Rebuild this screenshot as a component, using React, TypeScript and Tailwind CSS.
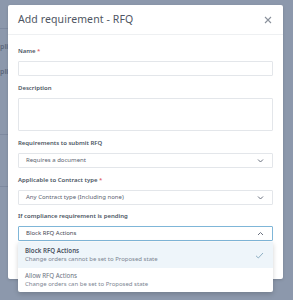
import React from "react";

const Chevron = ({ up = false }: { up?: boolean }) => (
  <svg width="7" height="5" viewBox="0 0 7 5" className="shrink-0">
    <path
      d={up ? "M1 4 L3.5 1.5 L6 4" : "M1 1.5 L3.5 4 L6 1.5"}
      fill="none"
      stroke="#6b7280"
      strokeWidth="1"
    />
  </svg>
);

const Label = ({ children, req = false }: { children: React.ReactNode; req?: boolean }) => (
  <div className="h-[9px] leading-[9px] text-[6px] font-semibold text-[#4b5563] mb-[5px]">
    {children}
    {req && <span className="text-[#e06666]"> *</span>}
  </div>
);

const Select = ({ value, open = false }: { value: string; open?: boolean }) => (
  <div
    className={`h-[15px] flex items-center justify-between pl-[7px] pr-[8px] bg-white border rounded-[1px] ${
      open ? "border-[#7fb6d8]" : "border-[#e3e6ea]"
    }`}
  >
    <span className={`text-[6px] ${open ? "text-[#3f4652]" : "text-[#5b6270]"}`}>{value}</span>
    <Chevron up={open} />
  </div>
);

export default function App() {
  return (
    <div
      className="relative w-[293px] h-[300px] overflow-hidden bg-[#8c98ac]"
      style={{ fontFamily: '"Noto Sans", "Open Sans", Arial, sans-serif' }}
    >
      {/* faint background page content */}
      <div className="absolute left-0 top-[42px] text-[7px] font-semibold text-[#4a5568] opacity-70">pli</div>
      <div className="absolute left-0 top-[67px] text-[7px] font-semibold text-[#4a5568] opacity-70">pli</div>
      <div className="absolute left-0 top-[28px] w-[8px] h-px bg-[#7e8aa0]" />
      <div className="absolute left-0 top-[134px] w-[8px] h-px bg-[#7e8aa0]" />
      <div className="absolute left-0 top-[186px] w-[8px] h-px bg-[#7e8aa0]" />

      <div className="absolute left-[8px] top-[5px] w-[275px] h-[274px] bg-white rounded-[2px] shadow-[0_1px_3px_rgba(0,0,0,0.15)]">
        <div className="h-[30px] flex items-center justify-between pl-[10px] pr-[11px] border-b border-[#eef0f2]">
          <span className="text-[10.5px] text-[#4f5663] tracking-[0.1px]">Add requirement - RFQ</span>
          <svg width="8" height="8" viewBox="0 0 8 8">
            <path d="M1 1 L7 7 M7 1 L1 7" stroke="#8a919c" strokeWidth="1.1" />
          </svg>
        </div>

        <div className="px-[10px] pt-[12px] flex flex-col">
          <Label req>Name</Label>
          <div className="h-[15px] border border-[#e3e6ea] rounded-[1px]" />

          <div className="mt-[8px]">
            <Label>Description</Label>
            <div className="h-[33px] border border-[#e3e6ea] rounded-[1px]" />
          </div>

          <div className="mt-[8px]">
            <Label>Requirements to submit RFQ</Label>
            <Select value="Requires a document" />
          </div>

          <div className="mt-[8px]">
            <Label req>Applicable to Contract type</Label>
            <Select value="Any Contract type (Including none)" />
          </div>

          <div className="mt-[7px] relative">
            <Label>If compliance requirement is pending</Label>
            <Select value="Block RFQ Actions" open />

            <div className="absolute left-0 right-0 top-[calc(100%+1px)] bg-white rounded-b-[2px] shadow-[0_2px_5px_rgba(0,0,0,0.18)] z-10">
              <div className="h-[26px] bg-[#eef5fa] flex items-center justify-between pl-[7px] pr-[9px]">
                <div className="flex flex-col leading-[8.5px]">
                  <span className="text-[6.2px] font-semibold text-[#4b5260]">Block RFQ Actions</span>
                  <span className="text-[6px] text-[#7c8592]">Change orders cannot be set to Proposed state</span>
                </div>
                <svg width="9" height="7" viewBox="0 0 9 7">
                  <path d="M1 3.8 L3.3 6 L8 1" fill="none" stroke="#8fb0c4" strokeWidth="1" />
                </svg>
              </div>
              <div className="h-[24px] flex items-center pl-[7px]">
                <div className="flex flex-col leading-[8.5px]">
                  <span className="text-[6.2px] text-[#6b7280]">Allow RFQ Actions</span>
                  <span className="text-[6px] text-[#7c8592]">Change orders can be set to Proposed state</span>
                </div>
              </div>
            </div>
          </div>
        </div>
      </div>
    </div>
  );
}
